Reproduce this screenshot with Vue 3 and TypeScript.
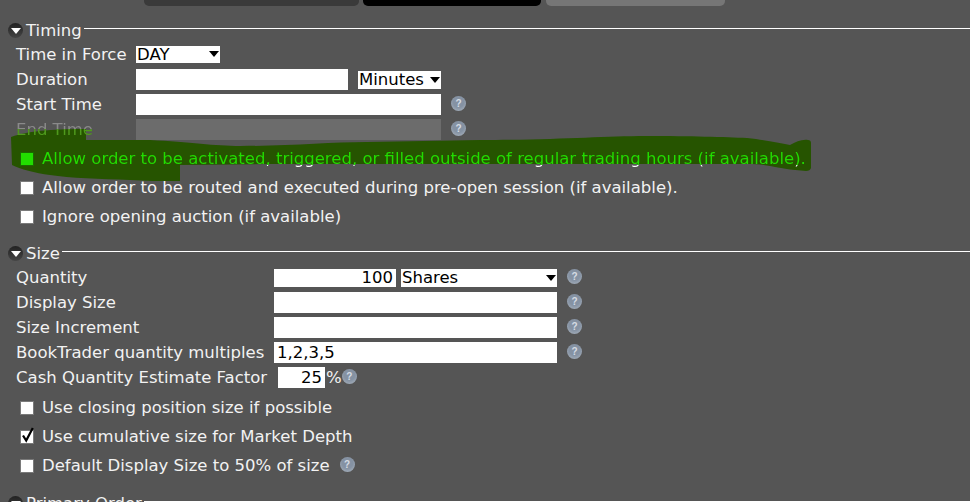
<script setup lang="ts">
const tabs = ['tab-dark', 'tab-black', 'tab-light'];
</script>

<template>
  <div class="page">
    <div class="tabs">
      <div v-for="tab in tabs" :key="tab" class="tab" :class="tab"></div>
    </div>

    <section class="section timing">
      <div class="section-header">
        <span class="toggle"></span>
        <span class="section-title">Timing</span>
        <span class="section-line"></span>
      </div>

      <div class="row">
        <label class="label w120">Time in Force</label>
        <div class="select select-day">DAY<span class="arrow"></span></div>
      </div>
      <div class="row">
        <label class="label w120">Duration</label>
        <input class="field field-duration" type="text" />
        <div class="select select-unit">Minutes<span class="arrow"></span></div>
      </div>
      <div class="row">
        <label class="label w120">Start Time</label>
        <input class="field field-time" type="text" />
        <span class="help">?</span>
      </div>
      <div class="row">
        <label class="label w120 disabled">End Time</label>
        <input class="field field-time field-disabled" type="text" disabled />
        <span class="help">?</span>
      </div>

      <div class="checks">
        <!-- marker stroke over the first option -->
        <svg class="brush" width="830" height="60" viewBox="0 0 830 60">
          <path
            d="M11 9 C30 2 60 1 86 1 L86 12 L150 12 C190 14 215 18 240 18 C290 18 330 14 367 14 L480 12 C560 12 600 8 647 8 C690 8 725 9 747 10 C765 12 778 15 790 17 C796 14 802 11 808 12 Q811 12 811 15 L811 40 Q810 43 806 43 C795 42 785 41 775 39 C765 37 758 36 747 36 L640 36 L480 36 L367 36 L267 36 L180 37 L180 53 C160 53 145 53 130 52 C100 51 70 50 50 47 C35 45 20 41 12 37 Z"
            fill="#265400"
          />
        </svg>
        <div class="check-row active">
          <span class="box box-active"></span>
          <span class="active-text">Allow order to be activated, triggered, or filled outside of regular trading hours (if available).</span>
        </div>
        <div class="check-row">
          <span class="box"></span>
          <span>Allow order to be routed and executed during pre-open session (if available).</span>
        </div>
        <div class="check-row">
          <span class="box"></span>
          <span>Ignore opening auction (if available)</span>
        </div>
      </div>
    </section>

    <section class="section size">
      <div class="section-header">
        <span class="toggle"></span>
        <span class="section-title">Size</span>
        <span class="section-line"></span>
      </div>

      <div class="row">
        <label class="label w258">Quantity</label>
        <input class="field field-qty" type="text" value="100" />
        <div class="select select-shares">Shares<span class="arrow"></span></div>
        <span class="help">?</span>
      </div>
      <div class="row">
        <label class="label w258">Display Size</label>
        <input class="field field-wide" type="text" />
        <span class="help">?</span>
      </div>
      <div class="row">
        <label class="label w258">Size Increment</label>
        <input class="field field-wide" type="text" />
        <span class="help">?</span>
      </div>
      <div class="row">
        <label class="label w258">BookTrader quantity multiples</label>
        <input class="field field-wide" type="text" value="1,2,3,5" />
        <span class="help">?</span>
      </div>
      <div class="row">
        <label class="label w262">Cash Quantity Estimate Factor</label>
        <input class="field field-factor" type="text" value="25" />
        <span class="percent">%</span>
        <span class="help help-tight">?</span>
      </div>

      <div class="checks checks-size">
        <div class="check-row">
          <span class="box"></span>
          <span>Use closing position size if possible</span>
        </div>
        <div class="check-row">
          <span class="box">
            <svg class="tick" width="16" height="18" viewBox="0 0 16 18">
              <path d="M3 9.5 L6.2 14.5 L12.8 2" fill="none" stroke="#000" stroke-width="2.2" />
            </svg>
          </span>
          <span>Use cumulative size for Market Depth</span>
        </div>
        <div class="check-row">
          <span class="box"></span>
          <span>Default Display Size to 50% of size</span>
          <span class="help help-inline">?</span>
        </div>
      </div>
    </section>

    <section class="section primary">
      <div class="section-header">
        <span class="toggle"></span>
        <span class="section-title">Primary Order</span>
        <span class="section-line"></span>
      </div>
    </section>
  </div>
</template>

<style>
html,
body {
  background: #555555;
  margin: 0;
  overflow: hidden;
}
</style>

<style scoped>
.page {
  background: #555555;
  color: #f2f2f2;
  font-family: 'DejaVu Sans', Verdana, sans-serif;
  font-size: 16.5px;
  height: 502px;
  overflow: hidden;
}

.tabs {
  display: flex;
  gap: 4px;
  height: 6px;
  padding-left: 144px;
}

.tab {
  border-radius: 0 0 5px 5px;
  height: 6px;
}

.tab-dark {
  background: #3a3a3a;
  width: 215px;
}

.tab-black {
  background: #000000;
  width: 178px;
}

.tab-light {
  background: #767676;
  margin-left: 1px;
  width: 179px;
}

.section-header {
  align-items: center;
  display: flex;
  height: 20px;
  margin-bottom: 2px;
  padding-left: 8px;
}

.timing {
  margin-top: 14px;
}

.size {
  margin-top: 12px;
}

.primary {
  margin-top: 13px;
}

.toggle {
  background: linear-gradient(#222222, #454545);
  border-radius: 50%;
  flex: none;
  height: 15px;
  position: relative;
  width: 15px;
}

.toggle::after {
  border-left: 5px solid transparent;
  border-right: 5px solid transparent;
  border-top: 6px solid #ffffff;
  content: '';
  left: 2.5px;
  position: absolute;
  top: 5px;
}

.section-title {
  margin-left: 3px;
}

.section-line {
  background: #ffffff;
  flex: 1;
  height: 1px;
  margin-left: 2px;
  margin-top: -3px;
}

.row {
  align-items: center;
  display: flex;
  height: 25px;
  padding-left: 16px;
}

.label {
  flex: none;
  white-space: nowrap;
}

.w120 {
  width: 120px;
}

.w258 {
  width: 258px;
}

.w262 {
  width: 262px;
}

.disabled {
  /* the marker stroke tints the lower half of this label */
  -webkit-background-clip: text;
  background-clip: text;
  background-image: linear-gradient(#8a8a8a 9px, #4f9a1c 9px);
  color: transparent;
  position: relative;
  z-index: 1;
}

.field {
  background: #ffffff;
  border: none;
  box-sizing: border-box;
  color: #000000;
  flex: none;
  font-family: inherit;
  font-size: inherit;
  height: 21px;
  outline: none;
  padding: 0 3px;
}

.field-duration {
  width: 212px;
}

.field-time {
  width: 305px;
}

.field-disabled {
  background: #6c6c6c;
}

.field-qty {
  height: 18px;
  text-align: right;
  width: 122px;
}

.field-wide {
  width: 283px;
}

.field-factor {
  text-align: right;
  width: 47px;
}

.select {
  align-items: center;
  background: #ffffff;
  box-sizing: border-box;
  color: #000000;
  display: flex;
  flex: none;
  height: 17px;
  justify-content: space-between;
  line-height: 17px;
  padding: 0 1px 0 1px;
}

.select-day {
  margin-top: -1px;
  width: 84px;
}

.select-unit {
  height: 18px;
  margin-left: 10px;
  width: 83px;
}

.select-shares {
  height: 18px;
  margin-left: 5px;
  width: 156px;
}

.arrow {
  border-left: 5.5px solid transparent;
  border-right: 5.5px solid transparent;
  border-top: 6px solid #000000;
  flex: none;
  height: 0;
  width: 0;
}

.percent {
  margin-left: 1px;
}

.help {
  align-items: center;
  background: radial-gradient(circle at 50% 40%, #8592a3 45%, #a8b2bd 90%);
  border-radius: 50%;
  color: #d5dce4;
  display: inline-flex;
  flex: none;
  font-family: 'Liberation Sans', Arial, sans-serif;
  font-size: 10px;
  font-weight: bold;
  height: 15px;
  justify-content: center;
  margin-left: 10px;
  margin-top: -2px;
  width: 15px;
}

.help-tight {
  margin-left: 0;
}

.help-inline {
  margin-left: 10px;
}

.checks {
  margin-top: 2px;
  position: relative;
}

.checks-size {
  margin-top: 3px;
}

.brush {
  left: 0;
  pointer-events: none;
  position: absolute;
  top: -16px;
}

.check-row {
  align-items: center;
  display: flex;
  height: 29px;
  padding-left: 20px;
  position: relative;
  white-space: nowrap;
}

.active-text {
  /* letters turn back to white below the marker stroke */
  -webkit-background-clip: text;
  background-clip: text;
  background-image: linear-gradient(#22dd00 16px, #ffffff 16px);
  color: transparent;
}

.box {
  background: #ffffff;
  border: 1px solid #7a7a7a;
  box-sizing: border-box;
  flex: none;
  height: 14px;
  margin-right: 8px;
  position: relative;
  width: 14px;
}

.box-active {
  background: #22dd00;
  border-color: #1a6a00;
}

.tick {
  left: -1px;
  position: absolute;
  top: -5px;
}
</style>
